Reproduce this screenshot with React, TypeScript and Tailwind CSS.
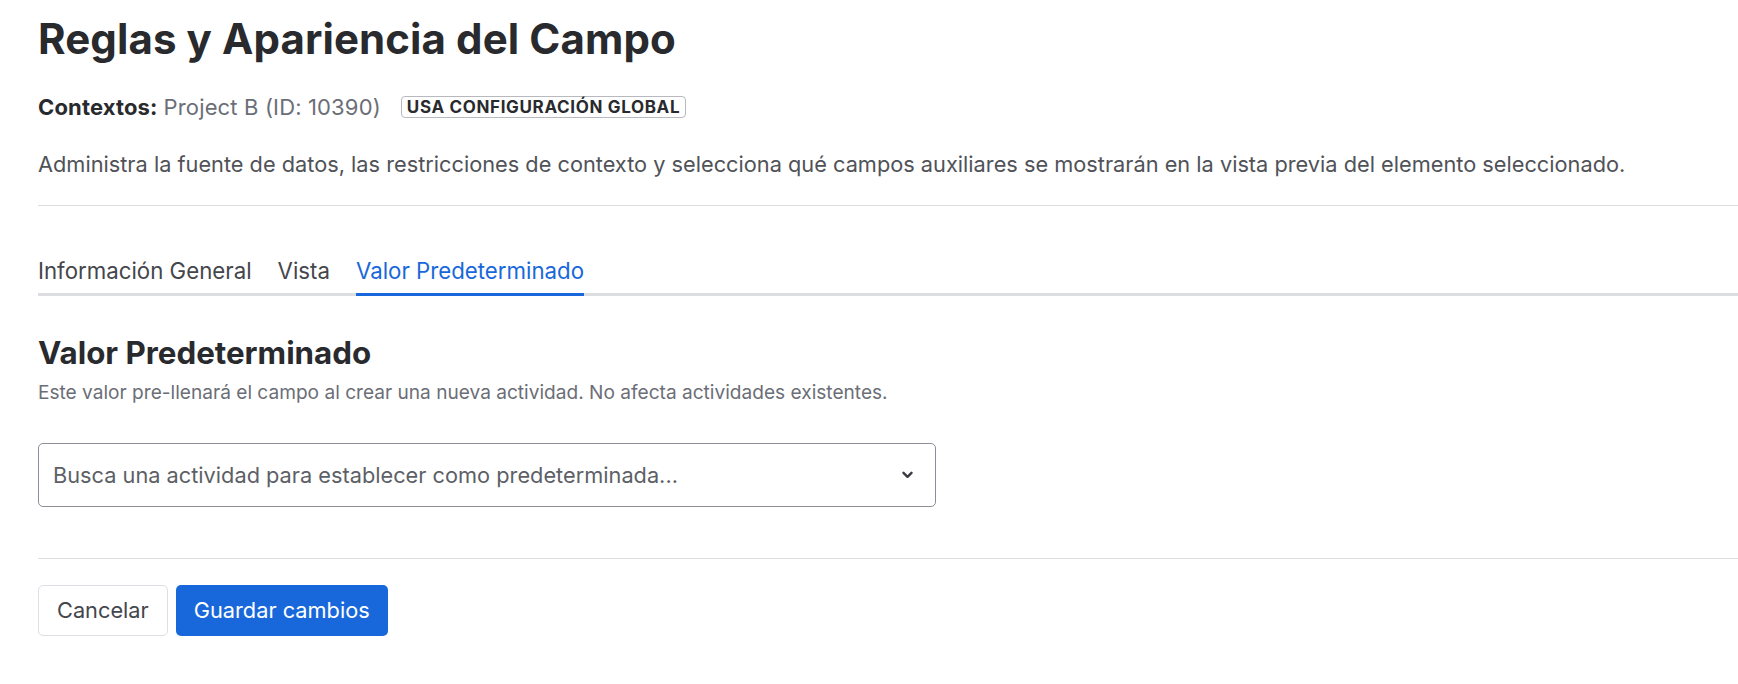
import React from "react";

export default function App() {
  const tabs = ["Información General", "Vista", "Valor Predeterminado"];
  const active = 2;
  return (
    <div
      className="min-h-[684px] w-full bg-white pl-[38px] pt-[14px] text-[#292a2e]"
      style={{ fontFamily: "Inter, 'Noto Sans', sans-serif" }}
    >
      <h1 className="text-[42px] font-bold leading-[50px] tracking-[0.1px]">
        Reglas y Apariencia del Campo
      </h1>

      <div className="mt-[29px] flex h-7 items-center text-[22px] leading-7 tracking-[0.15px]">
        <span className="font-bold">Contextos:</span>
        <span className="ml-[6px] text-[#6b6e76]">Project B (ID: 10390)</span>
        <span className="ml-[20px] inline-flex h-[22px] items-center rounded-[4px] border border-[#b7b9be] px-[5px] text-[17px] font-bold uppercase leading-[20px] tracking-[0.65px] text-[#292a2e]">
          Usa configuración global
        </span>
      </div>

      <p className="mt-[28px] text-[21.75px] leading-[30px] text-[#505258]">
        Administra la fuente de datos, las restricciones de contexto y selecciona qué campos auxiliares se mostrarán en la vista previa del elemento seleccionado.
      </p>

      <div className="mt-[26px] h-px bg-[#dddee1]" />

      <div className="mt-[50px] flex gap-[26px] border-b-[3px] border-[#dddee1]">
        {tabs.map((t, i) => (
          <div
            key={t}
            className={
              i === active
                ? "-mb-[3px] border-b-[3px] border-[#1868db] pb-[7px] text-[22.25px] leading-[30px] text-[#1868db]"
                : "-mb-[3px] border-b-[3px] border-transparent pb-[7px] text-[22.25px] leading-[30px] text-[#44464c]"
            }
          >
            {t}
          </div>
        ))}
      </div>

      <h2 className="mt-[38px] text-[31.3px] font-bold leading-[38px]">Valor Predeterminado</h2>
      <p className="mt-[7px] text-[19.1px] leading-[26px] text-[#6b6e76]">
        Este valor pre-llenará el campo al crear una nueva actividad. No afecta actividades existentes.
      </p>

      <div className="mt-[38px] flex h-16 w-[898px] items-center justify-between rounded-[5px] border border-[#8c8f97] pl-[14px] pr-[22px]">
        <span className="text-[21.75px] text-[#5d5f66]">Busca una actividad para establecer como predeterminada...</span>
        <svg width="11" height="8" viewBox="0 0 11 8" fill="none">
          <path d="M1.5 1.8 L5.5 5.8 L9.5 1.8" stroke="#3a3c42" strokeWidth="2.4" strokeLinecap="round" strokeLinejoin="round" />
        </svg>
      </div>

      <div className="mt-[51px] h-px bg-[#dddee1]" />

      <div className="mt-[26px] flex gap-2 pb-12">
        <button className="h-[51px] rounded-[5px] border border-[#dcdfe4] bg-white px-[18px] text-[21.75px] text-[#44464c]">
          Cancelar
        </button>
        <button className="h-[51px] rounded-[5px] bg-[#1868db] px-[18px] text-[21.75px] text-white">
          Guardar cambios
        </button>
      </div>
    </div>
  );
}
